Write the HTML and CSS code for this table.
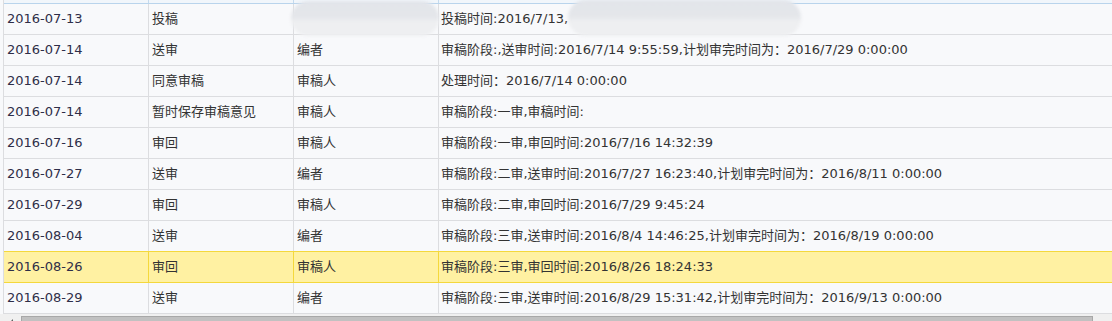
FILE: index.html
```html
<!DOCTYPE html>
<html lang="zh-CN">
<head>
<meta charset="utf-8">
<link rel="stylesheet" href="styles.css">
</head>
<body>
<div class="grid">
  <div class="head"><div class="hc"></div><div class="hc"></div><div class="hc"></div><div class="hc last"></div></div>
  <div class="row"><div class="c date">2016-07-13</div><div class="c">投稿</div><div class="c"></div><div class="c last">投稿时间:2016/7/13,</div></div>
  <div class="row"><div class="c date">2016-07-14</div><div class="c">送审</div><div class="c">编者</div><div class="c last">审稿阶段:,送审时间:2016/7/14 9:55:59,计划审完时间为：2016/7/29 0:00:00</div></div>
  <div class="row"><div class="c date">2016-07-14</div><div class="c">同意审稿</div><div class="c">审稿人</div><div class="c last">处理时间：2016/7/14 0:00:00</div></div>
  <div class="row"><div class="c date">2016-07-14</div><div class="c">暂时保存审稿意见</div><div class="c">审稿人</div><div class="c last">审稿阶段:一审,审稿时间:</div></div>
  <div class="row"><div class="c date">2016-07-16</div><div class="c">审回</div><div class="c">审稿人</div><div class="c last">审稿阶段:一审,审回时间:2016/7/16 14:32:39</div></div>
  <div class="row"><div class="c date">2016-07-27</div><div class="c">送审</div><div class="c">编者</div><div class="c last">审稿阶段:二审,送审时间:2016/7/27 16:23:40,计划审完时间为：2016/8/11 0:00:00</div></div>
  <div class="row"><div class="c date">2016-07-29</div><div class="c">审回</div><div class="c">审稿人</div><div class="c last">审稿阶段:二审,审回时间:2016/7/29 9:45:24</div></div>
  <div class="row"><div class="c date">2016-08-04</div><div class="c">送审</div><div class="c">编者</div><div class="c last">审稿阶段:三审,送审时间:2016/8/4 14:46:25,计划审完时间为：2016/8/19 0:00:00</div></div>
  <div class="row sel"><div class="c date">2016-08-26</div><div class="c">审回</div><div class="c">审稿人</div><div class="c last">审稿阶段:三审,审回时间:2016/8/26 18:24:33</div></div>
  <div class="row"><div class="c date">2016-08-29</div><div class="c">送审</div><div class="c">编者</div><div class="c last">审稿阶段:三审,送审时间:2016/8/29 15:31:42,计划审完时间为：2016/9/13 0:00:00</div></div>
  <div class="scrollbar"><span class="arrow"></span><div class="thumb"></div></div>
  <div class="blur b1"></div>
  <div class="blur b2"></div>
</div>
</body>
</html>
```
FILE: styles.css
```css
html, body {
  margin: 0;
  padding: 0;
  background: #f8f9fb;
}
body {
  font-family: "DejaVu Sans", "Noto Sans CJK SC", sans-serif;
  font-size: 13px;
  color: #333;
  width: 1112px;
  height: 321px;
  overflow: hidden;
}
.grid {
  position: relative;
  margin-left: 3px;
  border-left: 1px solid #dcdde0;
}
.head {
  display: grid;
  grid-template-columns: 145px 145px 145px 1fr;
  height: 3px;
  background: #f1f6fb;
  border-bottom: 1px solid #b9d4ec;
}
.hc {
  border-right: 1px solid #c4daee;
}
.hc.last { border-right: none; }
.row {
  display: grid;
  grid-template-columns: 145px 145px 145px 1fr;
  height: 30px;
  border-bottom: 1px solid #dcdde0;
  background: #f8f9fb;
}
.c {
  border-right: 1px solid #dcdde0;
  padding-left: 3px;
  line-height: 30px;
  white-space: nowrap;
  overflow: hidden;
}
.c.last {
  border-right: none;
  padding-left: 2px;
}
.date { color: #2e2e48; }
.row.sel {
  background: #fff1a2;
  border-bottom-color: #f4d83c;
  box-shadow: 0 -1px 0 #f4d83c;
}
.row.sel .c { border-right-color: #f4d83c; }
.row.sel .c.last { border-right: none; }
.scrollbar {
  position: relative;
  margin-left: -4px;
  height: 17px;
  background: #f0f0f0;
  display: flex;
  align-items: flex-start;
  padding-top: 2px;
}
.arrow {
  width: 0;
  height: 0;
  margin: 3px 6px 0 9px;
  border-top: 4px solid transparent;
  border-bottom: 4px solid transparent;
  border-right: 4px solid #606060;
}
.thumb {
  margin-left: 2px;
  width: 1070px;
  height: 14px;
  background: #c1c1c1;
  border: 1px solid #a8a8a8;
}
.blur {
  position: absolute;
  border-radius: 18px;
  filter: blur(1.5px);
  background: linear-gradient(#e2e5ea 0%, #e4e6ea 45%, #eeeff1 60%, #eeeff1 100%);
}
.b1 {
  left: 287px;
  top: 1px;
  width: 148px;
  height: 35px;
}
.b2 {
  left: 564px;
  top: 0px;
  width: 233px;
  height: 36px;
}
```
